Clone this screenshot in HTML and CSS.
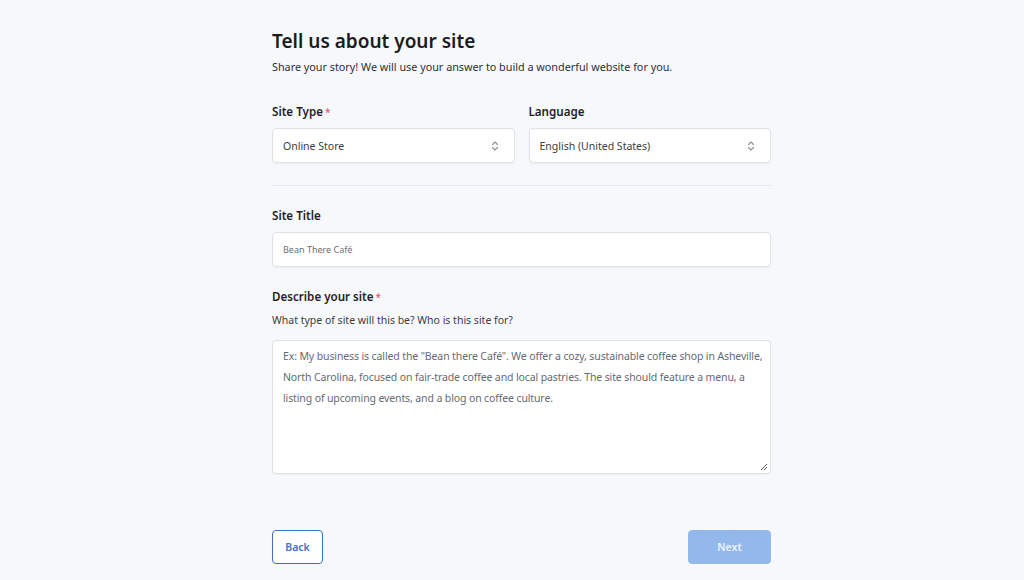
FILE: index.html
```html
<!DOCTYPE html>
<html lang="en">
<head>
<meta charset="utf-8">
<title>Tell us about your site</title>
<link rel="stylesheet" href="styles.css">
</head>
<body>
<main class="page">
  <h1 class="title">Tell us about your site</h1>
  <p class="subtitle">Share your story! We will use your answer to build a wonderful website for you.</p>

  <div class="row">
    <div class="field">
      <label class="label">Site Type<span class="req">*</span></label>
      <div class="select">
        <span>Online Store</span>
        <svg class="chev" width="8" height="12" viewBox="0 0 8 12"><path d="M1.5 4.5 L4 2 L6.5 4.5 M1.5 7.5 L4 10 L6.5 7.5" fill="none" stroke="#8a8f99" stroke-width="1.1" stroke-linecap="round" stroke-linejoin="round"/></svg>
      </div>
    </div>
    <div class="field">
      <label class="label">Language</label>
      <div class="select">
        <span>English (United States)</span>
        <svg class="chev" width="8" height="12" viewBox="0 0 8 12"><path d="M1.5 4.5 L4 2 L6.5 4.5 M1.5 7.5 L4 10 L6.5 7.5" fill="none" stroke="#8a8f99" stroke-width="1.1" stroke-linecap="round" stroke-linejoin="round"/></svg>
      </div>
    </div>
  </div>

  <hr class="divider">

  <label class="label">Site Title</label>
  <div class="input">Bean There Café</div>

  <label class="label label-desc">Describe your site<span class="req">*</span></label>
  <p class="help">What type of site will this be? Who is this site for?</p>
  <div class="textarea"><span>Ex: My business is called the "Bean there Café". We offer a cozy, sustainable coffee shop in Asheville, North Carolina, focused on fair-trade coffee and local pastries. The site should feature a menu, a listing of upcoming events, and a blog on coffee culture.</span><svg class="grip" width="8" height="8" viewBox="0 0 8 8"><path d="M7 1 L1 7 M7 4 L4 7" stroke="#555" stroke-width="1"/></svg></div>

  <div class="actions">
    <button class="btn btn-back">Back</button>
    <button class="btn btn-next">Next</button>
  </div>
</main>
</body>
</html>
```
FILE: styles.css
```css
* { box-sizing: border-box; }
html, body { margin: 0; padding: 0; }
body {
  background: #f7f8fc;
  font-family: "Noto Sans", "Open Sans", "Liberation Sans", sans-serif;
  color: #1e1f24;
  width: 1024px;
  height: 580px;
  overflow: hidden;
}
.page {
  width: 499px;
  margin: 0 0 0 272px;
  padding-top: 28px;
  display: flex;
  flex-direction: column;
}
.title {
  margin: 0;
  font-size: 19px;
  font-weight: 600;
  line-height: 26px;
  color: #1b1c20;
}
.subtitle {
  margin: 6px 0 0;
  font-size: 10.8px;
  line-height: 14px;
  color: #2e3036;
}
.row {
  display: flex;
  gap: 14px;
  margin-top: 30px;
}
.field { flex: 1; display: flex; flex-direction: column; }
.label {
  font-size: 11.6px;
  font-weight: 600;
  line-height: 16px;
  color: #1e1f24;
}
.req { color: #e05260; margin-left: 2px; font-weight: 400; font-size: 10px; vertical-align: top; }
.select {
  margin-top: 8px;
  height: 35px;
  background: #fff;
  border: 1px solid #dde1e8;
  border-radius: 4px;
  display: flex;
  align-items: center;
  justify-content: space-between;
  padding: 0 15px 0 10px;
  font-size: 10.5px;
  color: #3a3d44;
  box-shadow: 0 1px 2px rgba(20,30,60,0.04);
}
.chev { display: block; }
.divider {
  border: 0;
  border-top: 1px solid #e4e7ee;
  margin: 22px 0 22px;
  width: 100%;
}
.input {
  margin-top: 8px;
  height: 35px;
  background: #fff;
  border: 1px solid #dde1e8;
  border-radius: 4px;
  display: flex;
  align-items: center;
  padding: 0 10px;
  font-size: 9px;
  color: #6b6f78;
  box-shadow: 0 1px 2px rgba(20,30,60,0.04);
}
.label-desc { margin-top: 22px; }
.help {
  margin: 8px 0 0;
  font-size: 10.5px;
  line-height: 14px;
  color: #3a3d44;
}
.textarea {
  position: relative;
  margin-top: 13px;
  height: 134px;
  background: #fff;
  border: 1px solid #dde1e8;
  border-radius: 4px;
  padding: 5px 4px 6px 10px;
  font-size: 10.5px;
  line-height: 21px;
  letter-spacing: -0.12px;
  color: #666a73;
  box-shadow: 0 1px 2px rgba(20,30,60,0.04);
}
.grip { position: absolute; right: 2px; bottom: 2px; }
.actions {
  display: flex;
  justify-content: space-between;
  margin-top: 56px;
}
.btn {
  font-family: inherit;
  font-size: 10.5px;
  font-weight: 600;
  border-radius: 4px;
  height: 34px;
  cursor: pointer;
}
.btn-back {
  width: 51px;
  background: #fff;
  border: 1px solid #3f73c0;
  color: #3f73c0;
}
.btn-next {
  width: 83px;
  background: #93b8ec;
  border: 1px solid #93b8ec;
  color: #eef4fd;
}
```
